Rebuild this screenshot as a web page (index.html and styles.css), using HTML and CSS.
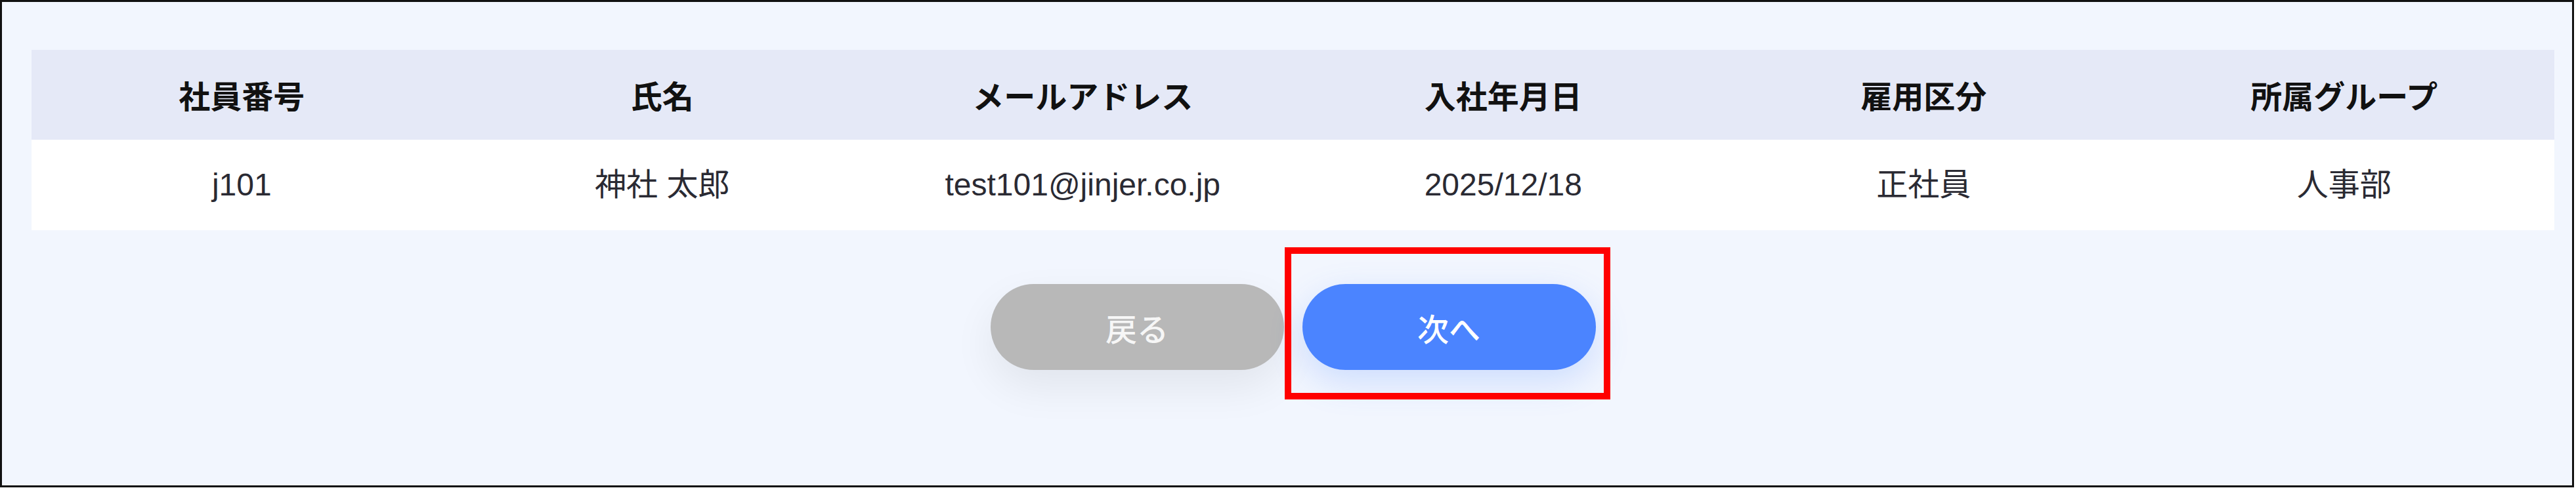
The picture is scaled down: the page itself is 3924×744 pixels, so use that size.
FILE: index.html
```html
<!DOCTYPE html>
<html lang="ja">
<head>
<meta charset="utf-8">
<title>確認</title>
<link rel="stylesheet" href="styles.css">
</head>
<body>
<div class="frame">
  <table class="emp-table">
    <thead>
      <tr>
        <th>社員番号</th>
        <th>氏名</th>
        <th>メールアドレス</th>
        <th>入社年月日</th>
        <th>雇用区分</th>
        <th>所属グループ</th>
      </tr>
    </thead>
    <tbody>
      <tr>
        <td>j101</td>
        <td>神社 太郎</td>
        <td>test101@jinjer.co.jp</td>
        <td>2025/12/18</td>
        <td>正社員</td>
        <td>人事部</td>
      </tr>
    </tbody>
  </table>
  <div class="actions">
    <button class="btn btn-back" type="button">戻る</button>
    <div class="next-wrap">
      <button class="btn btn-next" type="button">次へ</button>
      <span class="highlight"></span>
    </div>
  </div>
</div>
</body>
</html>
```

FILE: styles.css
```css
html, body {
  margin: 0;
  padding: 0;
  background: #ffffff;
}

body {
  font-family: "Liberation Sans", Arial, "Noto Sans CJK JP", sans-serif;
  color: #222;
}

.frame {
  box-sizing: border-box;
  width: 3921px;
  height: 743px;
  border: 3px solid #111;
  background: #f2f6fe;
  padding: 73px 27px 0 45px;
}

.emp-table {
  width: 100%;
  border-collapse: collapse;
  table-layout: fixed;
}

.emp-table th,
.emp-table td {
  text-align: center;
  padding: 0;
  font-size: 48px;
}

.emp-table thead tr {
  background: #e5e9f7;
}

.emp-table th {
  font-family: "Noto Sans CJK JP", sans-serif;
  font-weight: 700;
  color: #111;
  height: 137px;
  line-height: 57px;
}

.emp-table tbody tr {
  background: #ffffff;
}

.emp-table td {
  font-weight: 400;
  color: #2a2a33;
  height: 138px;
  line-height: 58px;
}

.actions {
  display: flex;
  justify-content: center;
  gap: 28px;
  margin-top: 82px;
}

.next-wrap {
  position: relative;
  display: flex;
}

.btn {
  width: 447px;
  height: 131px;
  border: none;
  border-radius: 66px;
  font-family: "Noto Sans CJK JP", sans-serif;
  font-size: 48px;
  font-weight: 500;
  color: #ffffff;
  padding: 0;
  cursor: pointer;
}

.btn-back {
  background: #b8b8b8;
  color: #f6f6f6;
  box-shadow: 0 26px 64px rgba(0, 0, 0, 0.07);
}

.btn-next {
  background: #4b84ff;
  box-shadow: 0 18px 52px rgba(75, 132, 255, 0.22);
}

.highlight {
  position: absolute;
  left: -27px;
  top: -56px;
  width: 496px;
  height: 232px;
  box-sizing: border-box;
  border: 10px solid #ff0000;
  pointer-events: none;
}
```
